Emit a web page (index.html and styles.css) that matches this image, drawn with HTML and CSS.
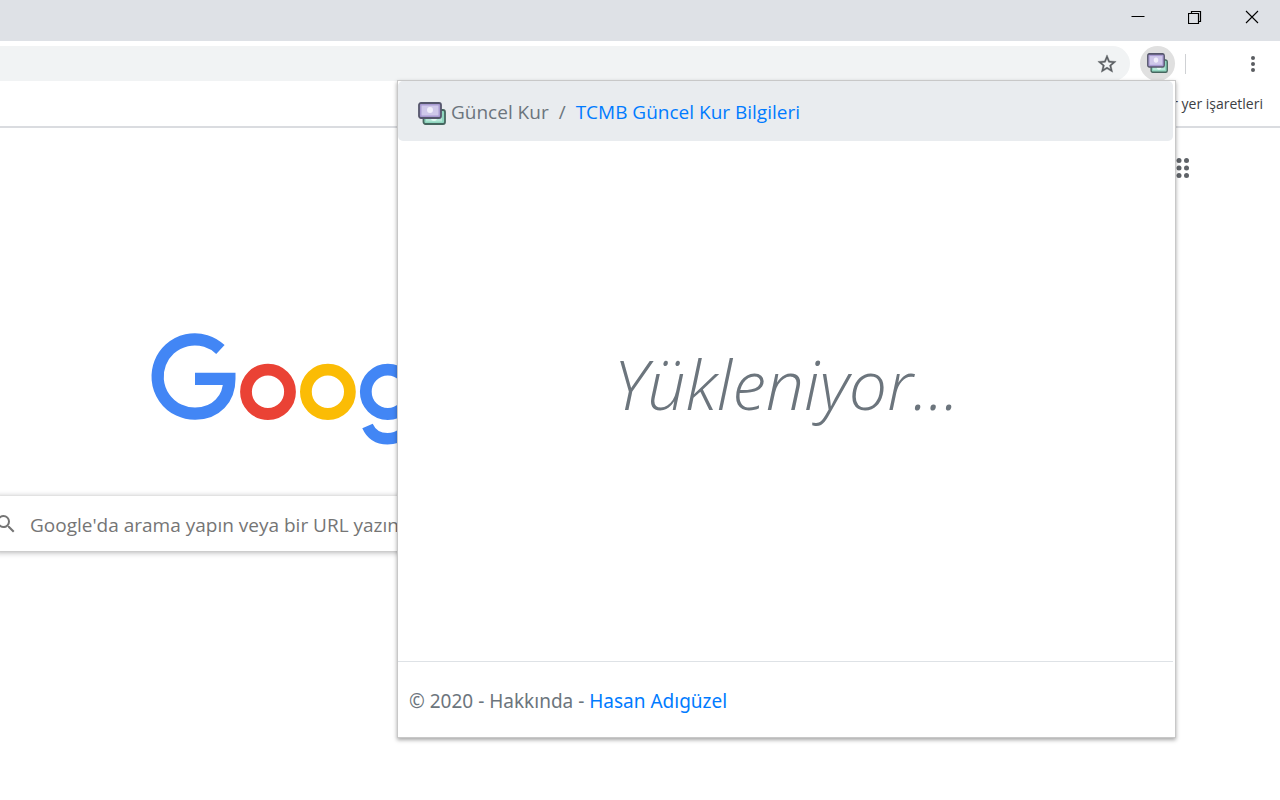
FILE: index.html
```html
<!DOCTYPE html>
<html lang="tr">
<head>
<meta charset="utf-8">
<title>Güncel Kur</title>
<link rel="stylesheet" href="styles.css">
</head>
<body>
<svg class="defs" aria-hidden="true">
  <symbol id="money" viewBox="0 0 28 24">
    <rect x="5.5" y="8" width="21.5" height="14" rx="2" fill="#8fd6bf" stroke="#46665f" stroke-width="1.800"/>
    <rect x="8" y="11" width="16" height="8.5" fill="#b5e8d8"/>
    <circle cx="16" cy="16" r="3" fill="#e2faf2"/>
    <rect x="1" y="1" width="22" height="15" rx="2" fill="#a99bd2" stroke="#55566c" stroke-width="1.800"/>
    <rect x="3.5" y="3.5" width="17" height="10" fill="#cfc8ea"/>
    <circle cx="12" cy="8" r="3" fill="#f1effb"/>
  </symbol>
</svg>
<header class="titlebar">
  <button class="win" aria-label="Simge durumuna küçült"><svg width="14" height="14" viewBox="0 0 14 14"><path d="M0.500 6.500H13.500" stroke="#000" fill="none"/></svg></button>
  <button class="win" aria-label="Önceki boyut"><svg width="14" height="14" viewBox="0 0 14 14"><path d="M.5 3.500h10v10H.5zM3.500 3.500V1.500h9v10h-2" stroke="#000" stroke-width="1.200" fill="none"/></svg></button>
  <button class="win" aria-label="Kapat"><svg width="14" height="14" viewBox="0 0 14 14"><path d="M1 1l12 12M13 1L1 13" stroke="#000" stroke-width="1.100" fill="none"/></svg></button>
</header>
<div class="toolbar">
  <div class="omnibox">
    <input class="address" type="text" aria-label="Adres çubuğu">
    <button class="star" aria-label="Yer işareti ekle"><svg width="22" height="22" viewBox="0 0 24 24"><path fill="#5a5d61" stroke="#5a5d61" stroke-width=".4" d="M22 9.240l-7.190-.62L12 2 9.190 8.630 2 9.240l5.460 4.730L5.820 21 12 17.270 18.180 21l-1.630-7.030L22 9.240zM12 15.400l-3.760 2.270 1-4.280-3.320-2.880 4.380-.38L12 6.100l1.710 4.040 4.380.38-3.320 2.880 1 4.280L12 15.400z"/></svg></button>
  </div>
  <button class="extension" aria-label="Güncel Kur"><svg width="21" height="21" viewBox="0 0 28 24" preserveAspectRatio="none"><use href="#money" width="28" height="24"/></svg></button>
  <span class="divider"></span>
  <button class="more" aria-label="Menü"><svg width="4" height="18" viewBox="0 0 4 18" fill="#5a5d61"><circle cx="2" cy="3" r="2"/><circle cx="2" cy="9" r="2"/><circle cx="2" cy="15" r="2"/></svg></button>
</div>
<nav class="bookmarks"><a class="bookmark" href="#">Diğer yer işaretleri</a></nav>
<main class="newtab">
  <div class="apps-row">
    <button class="apps" aria-label="Google uygulamaları"><svg width="20" height="20" viewBox="0 0 20 20" fill="#5f6368"><circle cx="2.500" cy="2.500" r="2.500"/><circle cx="10" cy="2.500" r="2.500"/><circle cx="17.500" cy="2.500" r="2.500"/><circle cx="2.500" cy="10" r="2.500"/><circle cx="10" cy="10" r="2.500"/><circle cx="17.500" cy="10" r="2.500"/><circle cx="2.500" cy="17.500" r="2.500"/><circle cx="10" cy="17.500" r="2.500"/><circle cx="17.500" cy="17.500" r="2.500"/></svg></button>
  </div>
  <svg class="logo" width="280" height="116" viewBox="150 331 280 116" fill="none" stroke="#4286f5" stroke-width="12.200" role="img" aria-label="Google">
    <path d="M220.400 349.500A37.200 37.200 0 1 0 195.300 413.700C216 413.700 229.400 399 229.400 378.900H195"/>
    <ellipse cx="268" cy="391.800" rx="22" ry="22.200" stroke="#ea4235" stroke-width="11.800"/>
    <ellipse cx="327.900" cy="391.800" rx="22" ry="22.200" stroke="#fbbc05" stroke-width="11.800"/>
    <ellipse cx="387.800" cy="391.800" rx="22" ry="22.200" stroke-width="11.800"/>
    <path d="M367.500 426C371.500 435 379 438.800 387.500 438.800C400 438.800 409 430 409 417V366" stroke-width="11.400"/>
  </svg>
  <form class="search">
    <svg width="24" height="24" viewBox="0 0 24 24"><path fill="#757575" d="M15.500 14h-.79l-.28-.27A6.470 6.470 0 0 0 16 9.500 6.500 6.500 0 1 0 9.500 16c1.610 0 3.090-.59 4.230-1.570l.27.28v.79l5 4.990L20.490 19l-4.990-5zm-6 0a4.500 4.500 0 1 1 0-9 4.500 4.500 0 0 1 0 9z"/></svg>
    <input class="query" type="text" placeholder="Google'da arama yapın veya bir URL yazın" aria-label="Ara">
  </form>
</main>
<section class="popup">
  <nav class="crumbs">
    <svg width="28" height="24"><use href="#money"/></svg>
    <span>Güncel Kur</span><span class="slash">/</span><a class="link" href="#">TCMB Güncel Kur Bilgileri</a>
  </nav>
  <p class="loading">Yükleniyor...</p>
  <footer class="foot">© 2020 - Hakkında - <a class="link" href="#">Hasan Adıgüzel</a></footer>
</section>
</body>
</html>
```
FILE: styles.css
```css
* { box-sizing: border-box; }
body {
  margin: 0;
  min-height: 100vh;
  position: relative;
  overflow: hidden;
  background: #fff;
  font-family: "Open Sans", "Noto Sans", sans-serif;
}
button { border: 0; padding: 0; background: none; display: flex; align-items: center; justify-content: center; }
input { border: 0; outline: 0; background: none; font-family: inherit; }
a { text-decoration: none; }
.defs { display: none; }
.titlebar { display: flex; justify-content: flex-end; height: 41px; background: #dee1e6; }
.win { width: 57px; height: 34px; }
.toolbar { display: flex; align-items: center; height: 45px; padding-right: 25px; }
.omnibox { flex: 1; display: flex; align-items: center; height: 35px; padding-right: 12px; background: #f1f3f4; border-radius: 0 18px 18px 0; }
.address { flex: 1; min-width: 0; }
.extension { width: 35px; height: 35px; margin-left: 10px; border-radius: 50%; background: #e0e0e0; }
.divider { width: 1px; height: 20px; margin: 0 65px 0 10px; background: #cfd1d4; }
.bookmarks { display: flex; justify-content: flex-end; align-items: center; height: 42px; padding: 0 17px 6px; border-bottom: 2px solid #dadce0; }
.bookmark { color: #3c4043; font-size: 14px; }
.newtab { display: flex; flex-direction: column; align-items: flex-start; }
.apps-row { align-self: flex-end; padding: 30px 91px 0 0; }
.logo { margin: 153px 0 0 150px; }
.search { display: flex; align-items: center; gap: 12px; width: 50%; height: 55px; margin-top: 49px; margin-left: -6px; background: #fff; box-shadow: 0 1px 6px rgba(32, 33, 36, .4); }
.query { flex: 1; height: 50px; padding: 2px 0 0; font-size: 19px; }
.query::placeholder { color: #757575; opacity: 1; }
.popup {
  position: absolute;
  top: 80px;
  right: 104px;
  width: 779px;
  max-width: 100%;
  display: flex;
  flex-direction: column;
  background: #fff;
  border: 1px solid #c8c8c8;
  box-shadow: 0 2px 4px rgba(0, 0, 0, .35);
  color: #6c757d;
  font-size: 19px;
}
.crumbs { display: flex; align-items: center; height: 60px; margin-right: 2px; padding: 1px 20px 0; background: #e9ecef; border-radius: 5px; }
.crumbs svg { margin: 4px 5px 0 0; }
.slash { margin: 0 10px; }
.link { color: #007bff; }
.loading { margin: 0; padding: 194px 0 228px; text-align: center; font-size: 68px; line-height: 98px; font-style: italic; font-weight: 300; }
.foot { height: 76px; margin-right: 2px; padding: 26px 11px 0; border-top: 1px solid #dee2e6; font-family: "Noto Sans", sans-serif; line-height: 26px; }
```
